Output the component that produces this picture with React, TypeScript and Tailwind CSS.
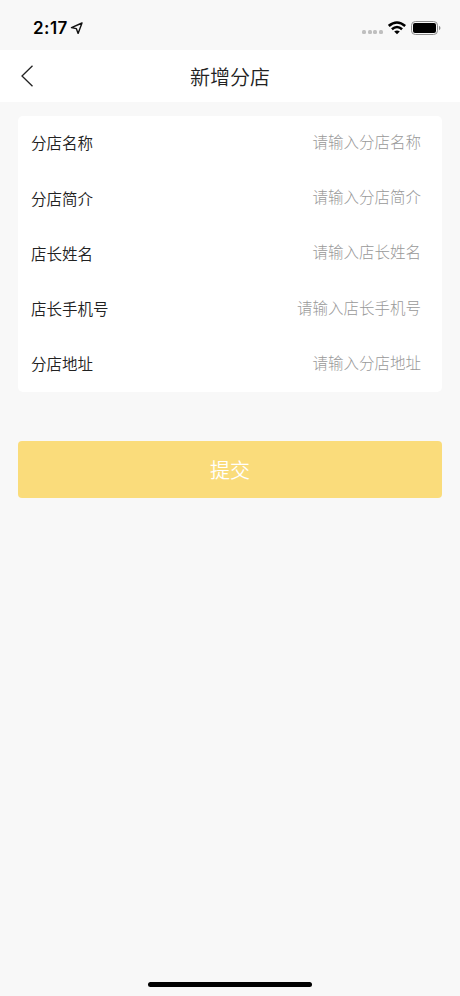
const fields = [
    { label: "分店名称", placeholder: "请输入分店名称" },
    { label: "分店简介", placeholder: "请输入分店简介" },
    { label: "店长姓名", placeholder: "请输入店长姓名" },
    { label: "店长手机号", placeholder: "请输入店长手机号" },
    { label: "分店地址", placeholder: "请输入分店地址" },
];

function StatusBar() {
    return (
        <div className="flex h-[50px] items-center justify-between pr-[19px] pl-[33px] pt-[6px]">
            <div className="flex items-center">
                <span className="font-[Inter] text-[17px] font-semibold leading-5 tracking-[0.45px] text-black">2:17</span>
                <svg className="ml-[2px]" width="13" height="13" viewBox="0 0 13 13" fill="none" stroke="#111" strokeWidth="1.4" strokeLinejoin="round">
                    <path d="M12 1 1.5 5.6 6.3 6.6 8.1 11.4Z" />
                </svg>
            </div>
            <div className="flex items-center">
                <div className="mt-[8px] flex gap-[1.7px]">
                    {[0, 1, 2, 3].map((dot) => (
                        <div key={dot} className="h-[4px] w-[4px] rounded-[1.5px] bg-[#bfbfbf]" />
                    ))}
                </div>
                <svg className="ml-[5px]" width="18" height="14" viewBox="0 0 18 14" fill="none" stroke="#000" strokeWidth="2.6">
                    <path d="M.8 4.9Q9-2 17.2 5M3.9 8.2Q9 3.8 14.1 8.2" />
                    <path d="M6.2 10.5Q9 8.3 11.8 10.5L9 13.3Z" fill="#000" stroke="none" />
                </svg>
                <svg className="ml-[5px]" width="30" height="14" viewBox="0 0 30 14">
                    <rect x=".5" y=".5" width="26" height="13" rx="3.8" fill="none" stroke="#8e8e8e" />
                    <rect x="2" y="2" width="23" height="10" rx="2" fill="#000" />
                    <path d="M28 4.7Q29.5 5.4 29.5 7T28 9.3Z" fill="#8e8e8e" />
                </svg>
            </div>
        </div>
    );
}

export default function App() {
    return (
        <div className="flex h-[996px] w-[460px] flex-col bg-[#f8f8f8] font-['Noto_Sans_CJK_SC',sans-serif]">
            <StatusBar />
            <header className="grid h-[52px] grid-cols-[60px_1fr_60px] items-center bg-white">
                <button className="pl-5">
                    <svg width="14" height="24" viewBox="0 0 14 24" fill="none" stroke="#222" strokeWidth="1.3">
                        <path d="M12.5 1.7 2 12 12.5 22.3" />
                    </svg>
                </button>
                <h1 className="pt-[2px] text-center text-[20px] leading-7 font-[350] text-[#222]">新增分店</h1>
            </header>
            <main className="flex-1 px-[18.4px] pt-[13.5px]">
                <div className="h-[276px] rounded-[5px] bg-white pr-[20.6px] pl-[12.6px]">
                    {fields.map((field) => (
                        <div key={field.label} className="flex h-[55.2px] items-center justify-between text-[15.5px]">
                            <label className="font-[350] text-[#222]">{field.label}</label>
                            <span className="pb-[3px] font-light text-[#999]">{field.placeholder}</span>
                        </div>
                    ))}
                </div>
                <button className="mt-[49px] h-[57.5px] w-full rounded-[4px] bg-[#fadc7b] pt-[2px] text-[20px] font-[350] text-white">提交</button>
            </main>
            <div className="mx-auto mb-[9.5px] h-[5px] w-[164px] rounded-full bg-black" />
        </div>
    );
}
